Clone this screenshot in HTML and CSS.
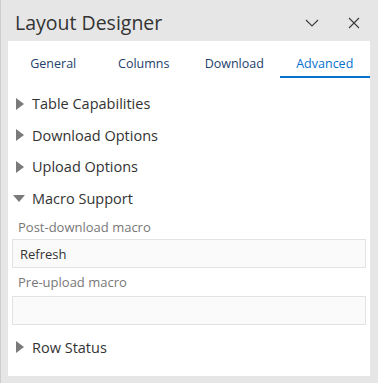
FILE: index.html
```html
<!DOCTYPE html>
<html>
<head>
<meta charset="utf-8">
<link rel="stylesheet" href="styles.css">
</head>
<body>
<div class="window">
  <div class="titlebar">
    <div class="title">Layout Designer</div>
    <div class="controls">
      <svg class="ctl" width="14" height="14" viewBox="0 0 14 14"><path d="M1 4 L7 10 L13 4" fill="none" stroke="#3a3a3a" stroke-width="1.1"/></svg>
      <svg class="ctl" width="14" height="14" viewBox="0 0 14 14"><path d="M2 2 L12 12 M12 2 L2 12" fill="none" stroke="#3a3a3a" stroke-width="1.1"/></svg>
    </div>
  </div>
  <div class="panel">
    <div class="tabs">
      <div class="tab">General</div>
      <div class="tab">Columns</div>
      <div class="tab">Download</div>
      <div class="tab active">Advanced</div>
    </div>
    <div class="tree">
      <div class="row"><svg class="tri" width="8" height="12" viewBox="0 0 8 12"><path d="M0 0 L8 6 L0 12 Z" fill="#7a7a7a"/></svg><span class="rowtext">Table Capabilities</span></div>
      <div class="row"><svg class="tri" width="8" height="12" viewBox="0 0 8 12"><path d="M0 0 L8 6 L0 12 Z" fill="#7a7a7a"/></svg><span class="rowtext">Download Options</span></div>
      <div class="row"><svg class="tri" width="8" height="12" viewBox="0 0 8 12"><path d="M0 0 L8 6 L0 12 Z" fill="#7a7a7a"/></svg><span class="rowtext">Upload Options</span></div>
      <div class="row"><svg class="tri-down" width="12" height="7" viewBox="0 0 12 7"><path d="M0 0 L12 0 L6 7 Z" fill="#7a7a7a"/></svg><span class="rowtext">Macro Support</span></div>
      <div class="section">
        <div class="label first">Post-download macro</div>
        <div class="input">Refresh</div>
        <div class="label">Pre-upload macro</div>
        <div class="input"></div>
      </div>
      <div class="row last"><svg class="tri" width="8" height="12" viewBox="0 0 8 12"><path d="M0 0 L8 6 L0 12 Z" fill="#7a7a7a"/></svg><span class="rowtext">Row Status</span></div>
    </div>
  </div>
</div>
</body>
</html>
```
FILE: styles.css
```css
html, body {
  margin: 0;
  padding: 0;
}
body {
  width: 378px;
  height: 383px;
  background: #e6e6e6;
  font-family: "Open Sans", "Noto Sans", sans-serif;
  overflow: hidden;
}
.window {
  height: 383px;
  border-left: 1px solid #cdcdcd;
  box-sizing: border-box;
  display: flex;
  flex-direction: column;
}
.titlebar {
  height: 41px;
  display: flex;
  align-items: center;
  justify-content: space-between;
  padding: 0 17px 0 14px;
}
.title {
  font-size: 19.5px;
  color: #333;
  padding-top: 3px;
}
.controls {
  display: flex;
  gap: 28px;
  align-items: center;
  padding-top: 5px;
}
.ctl {
  display: block;
}
.panel {
  margin: 0 8px 0 7px;
  background: #fff;
  height: 335px;
}
.tabs {
  display: flex;
  height: 37px;
}
.tab {
  flex: 1;
  text-align: center;
  font-size: 12.5px;
  color: #23416b;
  padding-top: 14px;
  box-sizing: border-box;
}
.tab.active {
  color: #0572ce;
  border-bottom: 2px solid #0572ce;
}
.tree {
  padding-top: 10px;
}
.row {
  height: 31.5px;
  display: flex;
  align-items: center;
  padding-left: 8px;
}
.rowtext {
  font-size: 14.5px;
  color: #333;
  margin-left: 7px;
}
.tri {
  display: block;
  margin-right: 1px;
}
.tri-down {
  display: block;
  margin-left: -3px;
  margin-right: 0;
}
.section {
  padding: 0 4px 0 4px;
}
.label {
  font-size: 13px;
  color: #777;
  padding-left: 6px;
  height: 28px;
  line-height: 28px;
}
.label.first {
  height: 25px;
  line-height: 27px;
}
.input {
  height: 29px;
  box-sizing: border-box;
  border: 1px solid #e3e3e3;
  background: #fafafa;
  font-size: 13px;
  color: #333;
  line-height: 29px;
  padding-left: 7px;
}
.row.last {
  margin-top: 6px;
  height: 32px;
}
```
